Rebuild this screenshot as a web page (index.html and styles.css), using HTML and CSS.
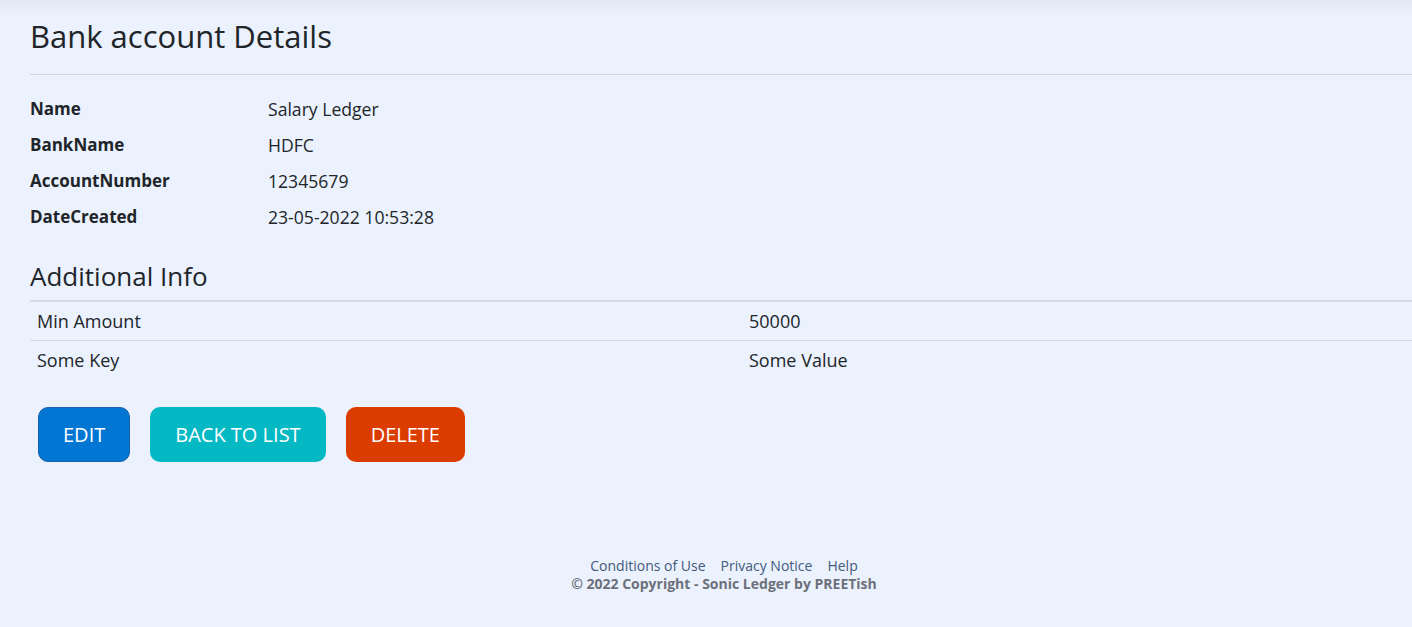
FILE: index.html
```html
<!DOCTYPE html>
<html lang="en">
<head>
<meta charset="utf-8">
<title>Bank account Details</title>
<link rel="stylesheet" href="styles.css">
</head>
<body>
<main class="page">
  <h1 class="title">Bank account Details</h1>
  <hr class="rule">
  <dl class="details">
    <dt>Name</dt><dd>Salary Ledger</dd>
    <dt>BankName</dt><dd>HDFC</dd>
    <dt>AccountNumber</dt><dd>12345679</dd>
    <dt>DateCreated</dt><dd>23-05-2022 10:53:28</dd>
  </dl>
  <h4 class="subtitle">Additional Info</h4>
  <div class="info-table">
    <div class="info-row"><div class="cell">Min Amount</div><div class="cell">50000</div></div>
    <div class="info-row"><div class="cell">Some Key</div><div class="cell">Some Value</div></div>
  </div>
  <div class="actions">
    <a class="btn btn-edit" href="#">EDIT</a>
    <a class="btn btn-back" href="#">BACK TO LIST</a>
    <a class="btn btn-delete" href="#">DELETE</a>
  </div>
</main>
<footer class="footer">
  <nav class="footer-links">
    <a href="#">Conditions of Use</a>
    <a href="#">Privacy Notice</a>
    <a href="#">Help</a>
  </nav>
  <div class="copyright">© 2022 Copyright - Sonic Ledger by PREETish</div>
</footer>
</body>
</html>
```

FILE: styles.css
```css
html, body {
  margin: 0;
  padding: 0;
}
body {
  min-height: 627px;
  font-family: "Open Sans", "Noto Sans", sans-serif;
  color: #212529;
  background: linear-gradient(to bottom, #e0e7f2 0px, #ebf2fe 14px, #ebf2fe 100%);
  overflow: hidden;
}
.page {
  padding-left: 30px;
}
.title {
  margin: 18px 0 0;
  font-size: 31px;
  line-height: 36px;
  font-weight: 500;
  color: #212529;
}
.rule {
  margin: 20px 0 0;
  border: 0;
  border-top: 1px solid #cfd5de;
  height: 0;
}
.details {
  display: grid;
  grid-template-columns: 238px 1fr;
  row-gap: 12px;
  margin: 22px 0 0;
  line-height: 24px;
}
.details dt {
  font-size: 17px;
  font-weight: 700;
}
.details dd {
  margin: 0;
  font-size: 17.6px;
}
.subtitle {
  margin: 32px 0 0;
  font-size: 26px;
  line-height: 30px;
  font-weight: 500;
}
.info-table {
  margin-top: 9px;
  border-top: 2px solid #d5dbe5;
  width: 1426px;
  font-size: 18px;
}
.info-row {
  display: grid;
  grid-template-columns: 712px 1fr;
}
.info-row + .info-row {
  border-top: 1px solid #d5dbe5;
}
.cell {
  padding: 0 6px 0 7px;
  line-height: 38px;
}
.actions {
  display: flex;
  gap: 20px;
  margin: 28px 0 0 8px;
}
.btn {
  display: inline-flex;
  align-items: center;
  height: 55px;
  box-sizing: border-box;
  padding: 0 24px;
  border-radius: 10px;
  color: #fff;
  text-decoration: none;
  font-size: 20px;
  border: 1px solid transparent;
}
.btn-edit {
  background: #0176d3;
  border-color: #1b5fae;
}
.btn-back {
  background: #04b8c4;
}
.btn-delete {
  background: #db3c00;
}
.footer {
  margin-top: 95px;
  padding-left: 36px;
  text-align: center;
  font-size: 14px;
  line-height: 18px;
}
.footer-links {
  display: flex;
  justify-content: center;
  gap: 15px;
}
.footer-links a {
  color: #43597a;
  text-decoration: none;
}
.copyright {
  font-weight: 700;
  color: #6c7079;
}
```
